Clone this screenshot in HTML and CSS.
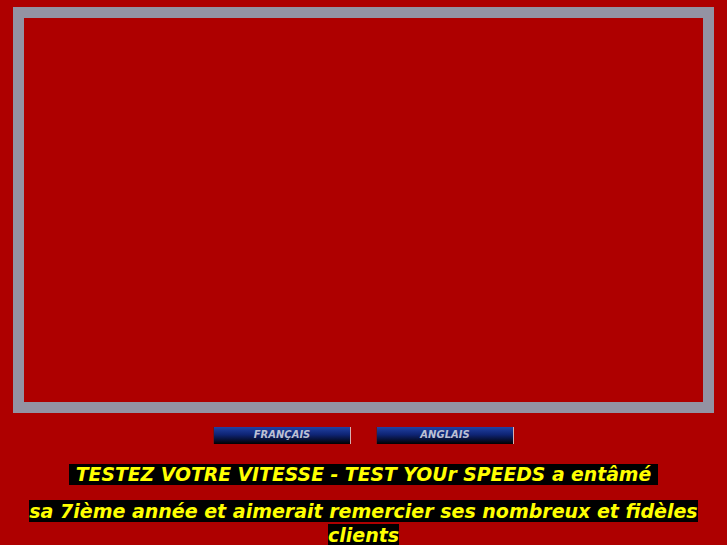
FILE: index.html
```html
<!DOCTYPE html>
<html>
<head>
<meta charset="utf-8">
<link rel="stylesheet" href="styles.css">
</head>
<body>
<div class="frame"></div>
<div class="buttons">
  <span class="btn">FRANÇAIS</span>
  <span class="btn">ANGLAIS</span>
</div>
<p class="line1"><span class="hl">&nbsp;TESTEZ VOTRE VITESSE - TEST YOUr SPEEDS a entâmé&nbsp;</span></p>
<p class="line2"><span class="hl">sa 7ième année et aimerait remercier ses nombreux et fidèles clients</span></p>
</body>
</html>
```
FILE: styles.css
```css
html, body {
  margin: 0;
  padding: 0;
  background: #ae0000;
  font-family: "DejaVu Sans", sans-serif;
}
.frame {
  box-sizing: border-box;
  width: 701px;
  height: 406px;
  margin: 7px 0 0 13px;
  border: 11px solid #9393a3;
  background: #ae0000;
}
.buttons {
  display: flex;
  justify-content: center;
  gap: 25px;
  margin-top: 14px;
}
.btn {
  box-sizing: border-box;
  width: 138px;
  height: 17px;
  background: linear-gradient(to bottom, #2242a4 0%, #0e2474 45%, #000 100%);
  border-left: 1px solid #7a1010;
  border-right: 1px solid #d8b0b0;
  color: #bcc0d4;
  font-size: 10px;
  font-weight: bold;
  font-style: italic;
  text-align: center;
  line-height: 16px;
}
.line1, .line2 {
  margin: 0;
  text-align: center;
  font-weight: bold;
  font-style: italic;
  color: #ffff00;
}
.hl {
  background: #000;
}
.line1 {
  margin-top: 19px;
  font-size: 18.8px;
  line-height: 23px;
}
.line2 {
  margin: 13px 20px 0;
  font-size: 19px;
  line-height: 24px;
}
```
